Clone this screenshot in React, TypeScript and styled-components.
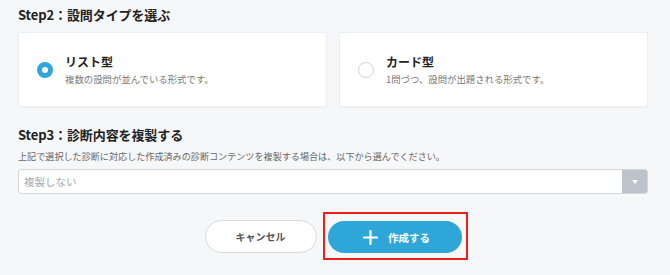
import React from "react";
import styled, { createGlobalStyle } from "styled-components";

const GlobalStyle = createGlobalStyle`
  html, body {
    margin: 0;
    padding: 0;
    background: #f6f7f9;
  }
  body {
    font-family: "Noto Sans CJK JP", "Noto Sans", sans-serif;
    color: #222;
  }
`;

type QuestionType = {
  key: string;
  title: string;
  description: string;
};

const types: QuestionType[] = [
  { key: "list", title: "リスト型", description: "複数の設問が並んでいる形式です。" },
  { key: "card", title: "カード型", description: "1問づつ、設問が出題される形式です。" }
];

const Page = styled.div`
  width: 670px;
  height: 275px;
  box-sizing: border-box;
  padding: 5px 22px 0 18px;
  display: flex;
  flex-direction: column;
`;

const StepTitle = styled.h2<{ $top?: number }>`
  margin: ${p => p.$top || 0}px 0 0;
  font-size: 13px;
  line-height: 20px;
  font-weight: 700;
  color: #222;
  letter-spacing: -0.1px;
`;

const CardGrid = styled.div`
  display: grid;
  grid-template-columns: 1fr 1fr;
  gap: 12px;
  margin-top: 7px;
`;

const Card = styled.label`
  height: 75px;
  box-sizing: border-box;
  background: #fff;
  border: 1px solid #eceef1;
  box-shadow: 0 1px 2px rgba(0, 0, 0, 0.03);
  display: flex;
  align-items: center;
  padding: 0 0 0 18px;
  cursor: pointer;
`;

const Radio = styled.span<{ $checked?: boolean }>`
  width: 16px;
  height: 16px;
  box-sizing: border-box;
  border-radius: 50%;
  flex-shrink: 0;
  background: #fff;
  border: ${p => (p.$checked ? "5px solid #2ea7d8" : "1px solid #cfd3d8")};
`;

const CardText = styled.div`
  margin-left: 12px;
  display: flex;
  flex-direction: column;
`;

const CardTitle = styled.div`
  font-size: 12px;
  line-height: 16px;
  font-weight: 700;
  color: #222;
`;

const CardDescription = styled.div`
  margin-top: 3px;
  font-size: 9.4px;
  line-height: 13px;
  color: #777;
`;

const Description = styled.p`
  margin: 4px 0 0;
  font-size: 9.1px;
  line-height: 14px;
  color: #666;
`;

const SelectBox = styled.div`
  margin-top: 6px;
  height: 25px;
  box-sizing: border-box;
  border: 1px solid #d3d6da;
  border-radius: 3px;
  background: #fff;
  display: flex;
  align-items: stretch;
  overflow: hidden;
`;

const SelectValue = styled.div`
  flex: 1;
  display: flex;
  align-items: center;
  padding-left: 5px;
  font-size: 10.5px;
  color: #a6a9ad;
`;

const SelectArrow = styled.div`
  width: 25px;
  background: #bcc3cb;
  display: flex;
  align-items: center;
  justify-content: center;

  &::before {
    content: "";
    border-left: 3.5px solid transparent;
    border-right: 3.5px solid transparent;
    border-top: 4px solid #fff;
    margin-top: 1px;
  }
`;

const Actions = styled.div`
  margin-top: 26px;
  display: flex;
  justify-content: center;
  gap: 11px;
`;

const CancelButton = styled.button`
  width: 112px;
  height: 33px;
  border-radius: 17px;
  border: 1px solid #d6d9dd;
  background: #fff;
  font-family: inherit;
  font-size: 10px;
  font-weight: 700;
  color: #555;
  cursor: pointer;
`;

const Highlight = styled.div`
  position: relative;

  &::after {
    content: "";
    position: absolute;
    left: -5px;
    right: -6px;
    top: -8px;
    bottom: -7px;
    border: 2px solid #e8211b;
    pointer-events: none;
  }
`;

const CreateButton = styled.button`
  width: 134px;
  height: 32px;
  margin-top: 1px;
  border-radius: 16px;
  border: none;
  background: #2ea7d8;
  color: #fff;
  font-family: inherit;
  font-size: 10.5px;
  font-weight: 700;
  display: flex;
  align-items: center;
  justify-content: center;
  gap: 10px;
  padding: 0 0 0 4px;
  cursor: pointer;
`;

const PlusIcon = () => (
  <svg width="15" height="15" viewBox="0 0 15 15">
    <path d="M7.5 1v13M1 7.5h13" stroke="#fff" strokeWidth="2.2" strokeLinecap="round" />
  </svg>
);

const App: React.FC = () => {
  const selected = "list";

  return (
    <>
      <GlobalStyle />
      <Page>
        <StepTitle>Step2：設問タイプを選ぶ</StepTitle>
        <CardGrid>
          {types.map(t => (
            <Card key={t.key}>
              <Radio $checked={t.key === selected} />
              <CardText>
                <CardTitle>{t.title}</CardTitle>
                <CardDescription>{t.description}</CardDescription>
              </CardText>
            </Card>
          ))}
        </CardGrid>

        <StepTitle $top={18}>Step3：診断内容を複製する</StepTitle>
        <Description>
          上記で選択した診断に対応した作成済みの診断コンテンツを複製する場合は、以下から選んでください。
        </Description>
        <SelectBox>
          <SelectValue>複製しない</SelectValue>
          <SelectArrow />
        </SelectBox>

        <Actions>
          <CancelButton>キャンセル</CancelButton>
          <Highlight>
            <CreateButton>
              <PlusIcon />
              作成する
            </CreateButton>
          </Highlight>
        </Actions>
      </Page>
    </>
  );
};

export default App;
